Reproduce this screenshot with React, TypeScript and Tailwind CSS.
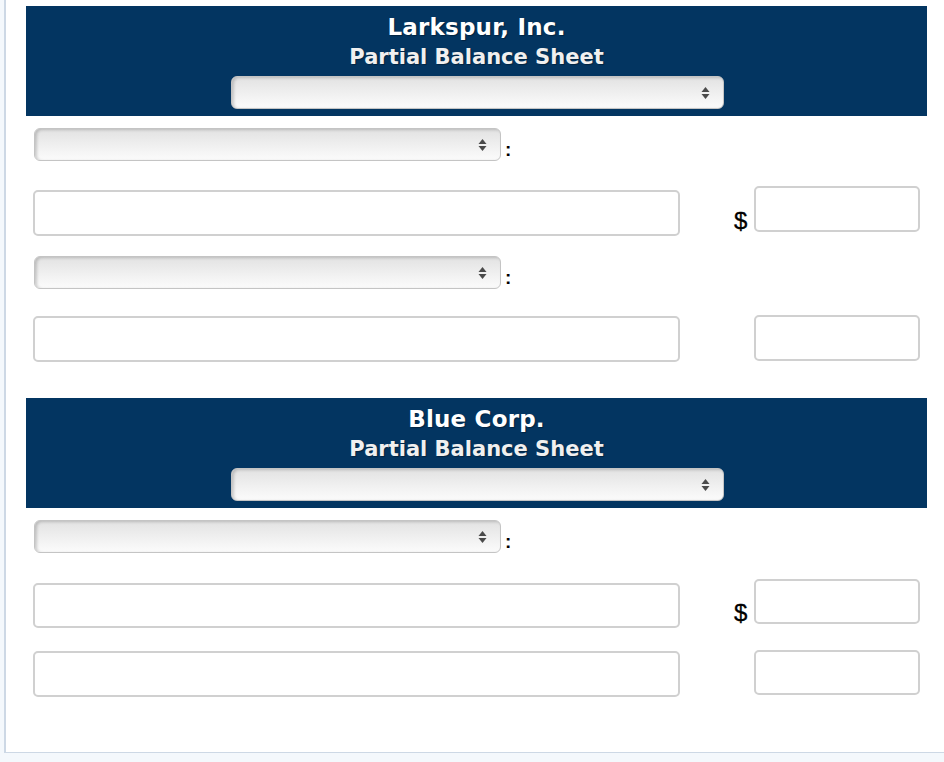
import React from "react";

const headerFont = { fontFamily: '"DejaVu Sans", Verdana, "Liberation Sans", sans-serif' };
const bodyFont = { fontFamily: '"Liberation Sans", Arial, sans-serif' };

function Arrows() {
  return (
    <svg width="9" height="14" viewBox="0 0 9 14" className="absolute right-[13px] top-1/2 -translate-y-1/2">
      <path d="M4.5 1 L8.5 6 L0.5 6 Z" fill="#4a4a4a" />
      <path d="M4.5 13 L8.5 8 L0.5 8 Z" fill="#4a4a4a" />
    </svg>
  );
}

function Select({ w }: { w: string }) {
  return (
    <div
      className={`relative h-[33px] ${w} rounded-[6px] border border-[#c4c4c4] bg-[linear-gradient(to_bottom,#e2e2e2,#f4f4f4_70%,#fbfbfb)] shadow-[inset_2px_1px_3px_rgba(0,0,0,0.18)]`}
    >
      <Arrows />
    </div>
  );
}

function Input({ cls }: { cls: string }) {
  return <div className={`rounded-[5px] border-2 border-[#d0d0d0] bg-white ${cls}`} />;
}

function Header({ title }: { title: string }) {
  return (
    <div className="ml-[20px] w-[901px] bg-[#033561] pt-[6px] pb-[7px] flex flex-col items-center" style={headerFont}>
      <div className="text-[23px] leading-[30px] font-bold text-white tracking-[0.2px] [text-shadow:1px_1px_1px_rgba(0,0,0,0.35)]">
        {title}
      </div>
      <div className="text-[21px] leading-[30px] font-bold text-[#f0f0f0] [text-shadow:1px_1px_1px_rgba(0,0,0,0.35)]">
        Partial Balance Sheet
      </div>
      <div className="mt-[4px] ml-[2px]">
        <Select w="w-[493px]" />
      </div>
    </div>
  );
}

function SelectRow({ mt }: { mt: string }) {
  return (
    <div className={`flex items-end ${mt} ml-[28px]`}>
      <Select w="w-[467px]" />
      <span className="ml-[4px] mb-[2px] text-[19px] font-bold leading-none text-black" style={bodyFont}>
        :
      </span>
    </div>
  );
}

function InputRow({ mt, leftMt, dollar, lh, rh }: { mt: string; leftMt: string; dollar: boolean; lh: string; rh: string }) {
  return (
    <div className={`flex items-start ${mt} ml-[27px]`}>
      <Input cls={`${leftMt} ${lh} w-[647px]`} />
      <div className="ml-[54px] flex items-end">
        <span
          className={`w-[20px] mb-[-1px] text-[24px] leading-none text-black [-webkit-text-stroke:0.3px_black] ${dollar ? "" : "invisible"}`}
          style={bodyFont}
        >
          $
        </span>
        <Input cls={`${rh} w-[166px]`} />
      </div>
    </div>
  );
}

export default function App() {
  return (
    <div className="w-[944px] h-[762px] bg-[#f4f8fc] overflow-hidden">
      <div className="ml-[4px] w-[960px] h-[753px] bg-white border-l-2 border-b-[1.5px] border-[#cdd8e5] pt-[6px]">
        <Header title="Larkspur, Inc." />
        <SelectRow mt="mt-[12px]" />
        <InputRow mt="mt-[25px]" leftMt="mt-[4px]" dollar lh="h-[46px]" rh="h-[46px]" />
        <SelectRow mt="mt-[20px]" />
        <InputRow mt="mt-[26px]" leftMt="mt-[1px]" dollar={false} lh="h-[46px]" rh="h-[46px]" />
        <div className="mt-[36px]">
          <Header title="Blue Corp." />
        </div>
        <SelectRow mt="mt-[12px]" />
        <InputRow mt="mt-[26px]" leftMt="mt-[4px]" dollar lh="h-[45px]" rh="h-[45px]" />
        <InputRow mt="mt-[22px]" leftMt="mt-[1px]" dollar={false} lh="h-[46px]" rh="h-[45px]" />
      </div>
    </div>
  );
}
